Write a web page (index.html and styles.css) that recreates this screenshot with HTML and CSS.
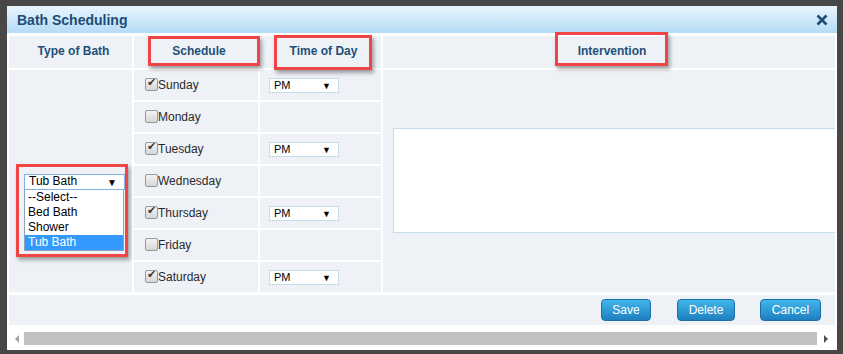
FILE: index.html
```html
<!DOCTYPE html>
<html lang="en">
<head>
  <meta charset="UTF-8">
  <title>Bath Scheduling</title>
  <link rel="stylesheet" href="styles.css">
</head>
<body>

<div class="dialog">
  <!-- Title bar -->
  <div class="titlebar">
    <span class="title">Bath Scheduling</span>
    <svg class="close" width="12" height="12" viewBox="0 0 12 12">
      <path d="M1.5 1.5 L10.5 10.5 M10.5 1.5 L1.5 10.5" stroke="#1d4c77" stroke-width="2.6"/>
    </svg>
  </div>

  <!-- Schedule table -->
  <div class="grid">
    <div class="cell head">Type of Bath</div>
    <div class="cell head">Schedule</div>
    <div class="cell head">Time of Day</div>
    <div class="cell head">Intervention</div>

    <div class="cell bath-type">
      <div class="select-wrap">
        <div class="select bath-select">Tub Bath<span class="arrow">&#9660;</span></div>
        <ul class="options">
          <li>--Select--</li>
          <li>Bed Bath</li>
          <li>Shower</li>
          <li class="selected">Tub Bath</li>
        </ul>
      </div>
    </div>

    <div class="cell day"><span class="check on"></span>Sunday</div>
    <div class="cell time"><div class="select time-select">PM<span class="arrow">&#9660;</span></div></div>

    <div class="cell intervention"><textarea></textarea></div>

    <div class="cell day"><span class="check"></span>Monday</div>
    <div class="cell time"></div>
    <div class="cell day"><span class="check on"></span>Tuesday</div>
    <div class="cell time"><div class="select time-select">PM<span class="arrow">&#9660;</span></div></div>
    <div class="cell day"><span class="check"></span>Wednesday</div>
    <div class="cell time"></div>
    <div class="cell day"><span class="check on"></span>Thursday</div>
    <div class="cell time"><div class="select time-select">PM<span class="arrow">&#9660;</span></div></div>
    <div class="cell day"><span class="check"></span>Friday</div>
    <div class="cell time"></div>
    <div class="cell day"><span class="check on"></span>Saturday</div>
    <div class="cell time"><div class="select time-select">PM<span class="arrow">&#9660;</span></div></div>
  </div>

  <!-- Buttons -->
  <div class="buttons">
    <button class="btn btn-save">Save</button>
    <button class="btn btn-delete">Delete</button>
    <button class="btn btn-cancel">Cancel</button>
  </div>

  <!-- Horizontal scrollbar -->
  <div class="hscroll">
    <span class="scroll-arrow left"></span>
    <span class="thumb"></span>
    <span class="scroll-arrow right"></span>
  </div>

  <!-- Red annotation boxes -->
  <div class="mark mark-schedule"></div>
  <div class="mark mark-time"></div>
  <div class="mark mark-intervention"></div>
  <div class="mark mark-type"></div>
</div>

</body>
</html>
```

FILE: styles.css
```css
body {
  margin: 0;
  padding: 0;
  height: 354px;
  overflow: hidden;
  background-color: #474747;
  font-family: "Liberation Sans", Arial, sans-serif;
  font-size: 12px;
}

.dialog {
  position: relative;
  margin: 6px 0 0 7px;
  width: 830px;
  height: 344px;
  background-color: #fff;
  display: flex;
  flex-direction: column;
  overflow: hidden;
}

.titlebar {
  height: 27px;
  display: flex;
  align-items: center;
  justify-content: space-between;
  padding: 0 9px 0 10px;
  background: linear-gradient(#e9f5fd, #b5dbf6);
}

.title {
  font-size: 14px;
  font-weight: bold;
  color: #1d4c77;
}

.close {
  display: block;
}

.grid {
  margin: 3px 2px 0 2px;
  display: grid;
  grid-template-columns: 123px 124px 121px 452px;
  grid-template-rows: 32px repeat(7, 30px);
  gap: 2px;
}

.cell {
  background-color: #eef2f7;
  display: flex;
  align-items: center;
}

.head {
  justify-content: center;
  padding: 0 0 3px 6px;
  font-weight: bold;
  color: #1e4f78;
}

.bath-type {
  grid-column: 1;
  grid-row: 2 / span 7;
  padding-left: 15px;
  padding-top: 1px;
}

.intervention {
  grid-column: 4;
  grid-row: 2 / span 7;
  padding-left: 10px;
  padding-bottom: 1px;
  overflow: hidden;
}

.intervention textarea {
  flex: none;
  width: 452px;
  height: 105px;
  box-sizing: border-box;
  border: 1px solid #c7dde9;
  background-color: #fff;
  resize: both;
}

.day {
  padding-left: 11px;
  color: #2a2a2a;
}

.time {
  padding-left: 9px;
}

.check {
  width: 11px;
  height: 11px;
  border: 1px solid #9a9a9a;
  border-radius: 2px;
  background: linear-gradient(#f4f4f4, #d6d6d6);
  position: relative;
  top: -1px;
}

.check.on::after {
  content: "\2714";
  position: absolute;
  left: 1px;
  top: -3px;
  font-size: 11px;
  color: #3a3a3a;
}

.select {
  position: relative;
  box-sizing: border-box;
  background-color: #fff;
  color: #000;
  line-height: 13px;
}

.arrow {
  position: absolute;
  font-size: 9px;
  top: 1px;
}

.time-select {
  width: 70px;
  height: 15px;
  border: 1px solid #c4dced;
  padding-left: 4px;
  font-size: 11px;
}

.time-select .arrow {
  right: 7px;
}

.select-wrap {
  position: relative;
  width: 101px;
}

.bath-select {
  width: 101px;
  height: 16px;
  border: 1px solid #7fb3e6;
  padding-left: 4px;
}

.bath-select .arrow {
  right: 7px;
  font-size: 10px;
}

.options {
  position: absolute;
  left: 0;
  top: 16px;
  width: 100px;
  margin: 0;
  padding: 0;
  list-style: none;
  background-color: #fff;
  border: 1px solid #8ca3bd;
  border-top: none;
  box-sizing: border-box;
  z-index: 1;
}

.options li {
  height: 15px;
  line-height: 14px;
  padding-left: 3px;
  color: #000;
}

.options li.selected {
  background-color: #3399ff;
  color: #fff;
}

.buttons {
  margin: 3px 2px 0 2px;
  height: 30px;
  background-color: #eef2f7;
  display: flex;
  align-items: center;
  justify-content: flex-end;
  gap: 25px;
  padding-right: 14px;
}

.btn {
  height: 22px;
  padding: 0;
  border: 1px solid #1b6ea6;
  border-radius: 4px;
  background: linear-gradient(#42b6ea, #1e7fc0);
  color: #fff;
  font-family: "Liberation Sans", Arial, sans-serif;
  font-size: 12px;
}

.btn-save {
  width: 50px;
  margin-right: 1px;
}

.btn-delete {
  width: 58px;
}

.btn-cancel {
  width: 61px;
}

.hscroll {
  margin: 7px 2px 0 2px;
  height: 13px;
  display: flex;
  align-items: stretch;
}

.scroll-arrow {
  width: 15px;
  display: flex;
  align-items: center;
  justify-content: center;
}

.scroll-arrow.right {
  width: 18px;
}

.scroll-arrow.left::before {
  content: "";
  border-top: 4px solid transparent;
  border-bottom: 4px solid transparent;
  border-right: 4px solid #a3a3a3;
}

.scroll-arrow.right::before {
  content: "";
  border-top: 4px solid transparent;
  border-bottom: 4px solid transparent;
  border-left: 4px solid #505050;
}

.thumb {
  flex: 1;
  background-color: #c1c1c1;
}

/* red annotation boxes drawn over the screenshot */
.mark {
  position: absolute;
  border: 3px solid #f04545;
  box-sizing: border-box;
  box-shadow: 2px 3px 4px rgba(0, 0, 0, 0.35);
}

.mark-schedule {
  left: 141px;
  top: 30px;
  width: 112px;
  height: 30px;
}

.mark-time {
  left: 267px;
  top: 29px;
  width: 98px;
  height: 35px;
}

.mark-intervention {
  left: 548px;
  top: 26px;
  width: 113px;
  height: 34px;
}

.mark-type {
  left: 9px;
  top: 158px;
  width: 112px;
  height: 93px;
}
```
